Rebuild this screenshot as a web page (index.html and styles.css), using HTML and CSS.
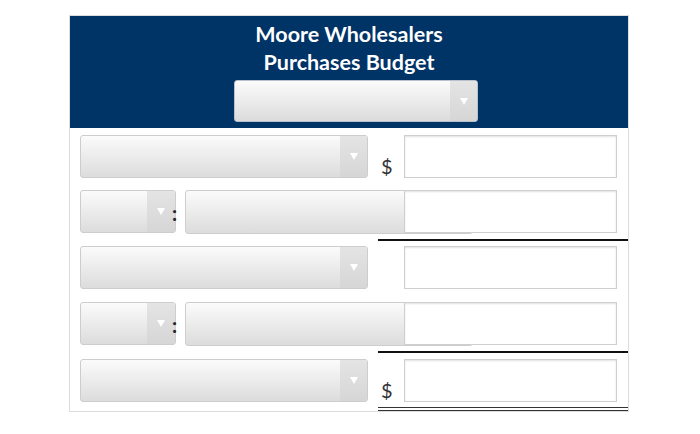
FILE: index.html
```html
<!DOCTYPE html>
<html lang="en">
<head>
<meta charset="utf-8">
<title>Moore Wholesalers Purchases Budget</title>
<link rel="stylesheet" href="styles.css">
</head>
<body>
<div class="frame">
  <div class="header">
    <div class="title">Moore Wholesalers</div>
    <div class="title">Purchases Budget</div>
    <div class="select head-select"><span class="arrow"></span></div>
  </div>
  <div class="content">
    <div class="row">
      <div class="select wide"><span class="arrow"></span></div>
      <div class="dollar">$</div>
      <div class="field"></div>
    </div>
    <div class="row gap-12">
      <div class="select small"><span class="arrow"></span></div>
      <div class="colon">:</div>
      <div class="select mid"></div>
      <div class="field under"></div>
    </div>
    <div class="rule"></div>
    <div class="row">
      <div class="select wide"><span class="arrow"></span></div>
      <div class="dollar"></div>
      <div class="field"></div>
    </div>
    <div class="row gap-13">
      <div class="select small"><span class="arrow"></span></div>
      <div class="colon">:</div>
      <div class="select mid"></div>
      <div class="field under"></div>
    </div>
    <div class="rule rule-b"></div>
    <div class="row">
      <div class="select wide"><span class="arrow"></span></div>
      <div class="dollar">$</div>
      <div class="field"></div>
    </div>
    <div class="double"></div>
  </div>
</div>
</body>
</html>
```

FILE: styles.css
```css
* { box-sizing: border-box; }

body {
  margin: 0;
  background: #fff;
  font-family: Lato, "Open Sans", "Liberation Sans", sans-serif;
}

.frame {
  width: 560px;
  margin: 15px 0 0 69px;
  border: 1px solid #dcdcdc;
}

.header {
  background: #003366;
  color: #fff;
  text-align: center;
  padding: 4px 0 6px;
}

.title {
  font-weight: 700;
  font-size: 21.5px;
  line-height: 28px;
}

.select {
  display: flex;
  justify-content: flex-end;
  border: 1px solid #cdcdcd;
  border-radius: 3px;
  overflow: hidden;
  background: linear-gradient(#fbfbfb, #dcdcdc);
}

.arrow {
  width: 27px;
  display: flex;
  align-items: center;
  justify-content: center;
  background: linear-gradient(#e4e4e4, #d6d6d6);
}

.arrow::before {
  content: "";
  border-left: 4px solid transparent;
  border-right: 4px solid transparent;
  border-top: 7px solid #fff;
}

.head-select {
  width: 244px;
  height: 42px;
  margin: 4px 0 0 164px;
  border-color: #b9c2cc;
}

.content {
  display: flex;
  flex-direction: column;
  padding: 7px 0 0 10px;
}

.row {
  display: flex;
  height: 43px;
}

.gap-12 { margin-top: 12px; }
.gap-13 { margin-top: 13px; }

.wide { width: 288px; }

.small { width: 96px; }
.small .arrow { width: 28px; }

.mid {
  width: 288px;
  height: 44px;
}

.colon {
  width: 13px;
  margin-left: -4px;
  display: flex;
  align-items: center;
  font-size: 20px;
  font-weight: 700;
  line-height: 1;
  color: #222;
  padding-top: 3px;
}

.dollar {
  width: 36px;
  padding: 0 0 2px 13px;
  display: flex;
  align-items: flex-end;
  font-size: 20px;
  line-height: 1;
  color: #333;
}

.field {
  width: 213px;
  background: #fff;
  border: 1px solid #cfcfcf;
  box-shadow: inset 0 1px 2px rgba(0, 0, 0, 0.12);
}

.field.under {
  margin-left: -69px;
}

.rule {
  height: 2px;
  margin: 6px 0 5px 298px;
  background: #111;
}

.rule-b { margin-bottom: 6px; }

.double {
  height: 4px;
  margin: 5px 0 0 298px;
  border-top: 1px solid #333;
  border-bottom: 1px solid #333;
}
```
